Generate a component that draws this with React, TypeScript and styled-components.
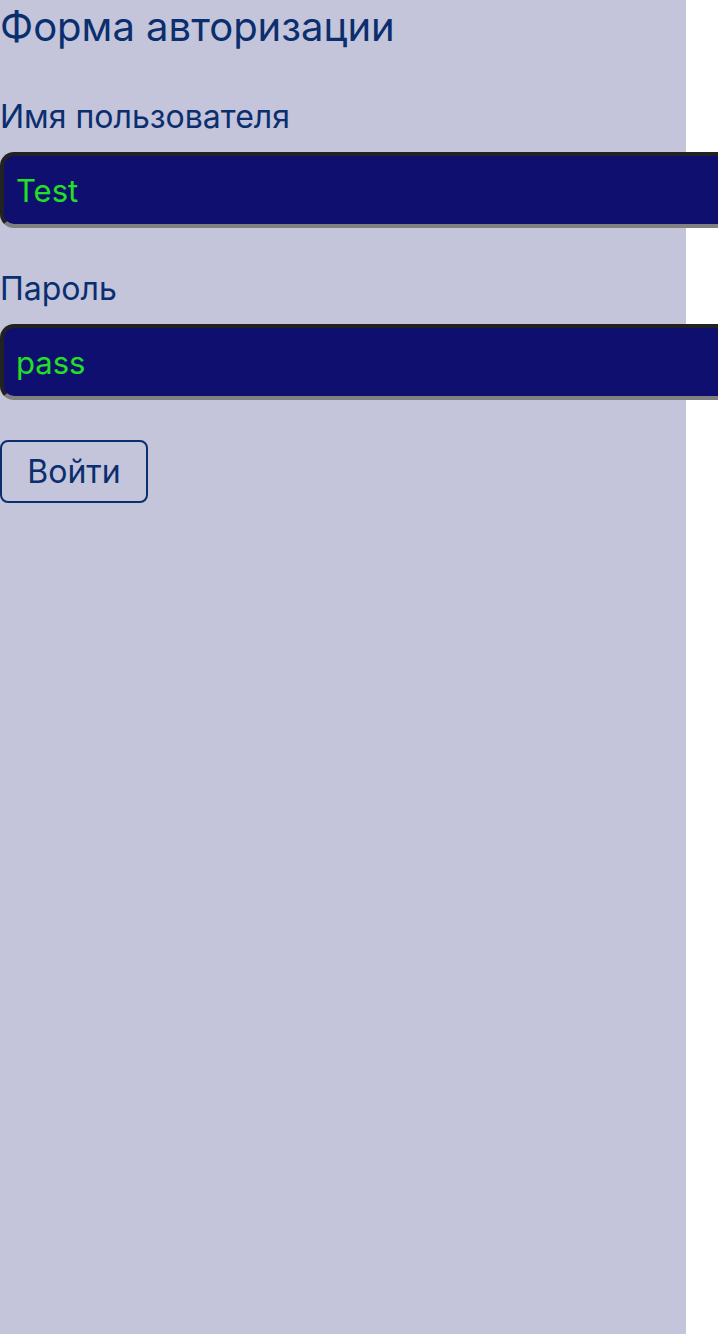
import React from "react";
import styled, { createGlobalStyle } from "styled-components";

const Global = createGlobalStyle`
  html, body { margin: 0; padding: 0; background: #ffffff; }
  body { font-family: Inter, "Noto Sans", sans-serif; overflow: hidden; }
`;

const Page = styled.div`
  width: 686px;
  min-height: 1334px;
  background: #c4c4da;
  color: #0a2e6e;
  box-sizing: border-box;
`;

const Title = styled.h1`
  margin: 0;
  font-size: 40px;
  font-weight: 400;
  line-height: 54px;
`;

const Form = styled.form`
  display: flex;
  flex-direction: column;
  margin-top: 43px;
`;

const Field = styled.div`
  display: flex;
  flex-direction: column;
  gap: 16px;
  margin-bottom: 41px;
`;

const Label = styled.label`
  font-size: 32px;
  line-height: 39px;
`;

const Input = styled.input`
  width: 760px;
  height: 76px;
  box-sizing: border-box;
  padding: 0 12px;
  background: #0f0f70;
  color: #22e022;
  font-family: Inter, "Noto Sans", sans-serif;
  font-size: 31px;
  border-width: 4px;
  border-style: solid;
  border-color: #222222 #808080 #808080 #222222;
  border-radius: 14px;
  outline: none;
`;

const Button = styled.button`
  align-self: flex-start;
  width: 148px;
  height: 63px;
  margin-top: -1px;
  background: transparent;
  color: #0a2e6e;
  border: 2px solid #0a2e6e;
  border-radius: 8px;
  font-family: Inter, "Noto Sans", sans-serif;
  font-size: 32px;
  padding: 0;
`;

export default function App() {
  return (
    <Page>
      <Global />
      <Title>Форма авторизации</Title>
      <Form onSubmit={(e) => e.preventDefault()}>
        <Field>
          <Label htmlFor="user">Имя пользователя</Label>
          <Input id="user" defaultValue="Test" />
        </Field>
        <Field>
          <Label htmlFor="pass">Пароль</Label>
          <Input id="pass" defaultValue="pass" />
        </Field>
        <Button type="submit">Войти</Button>
      </Form>
    </Page>
  );
}
